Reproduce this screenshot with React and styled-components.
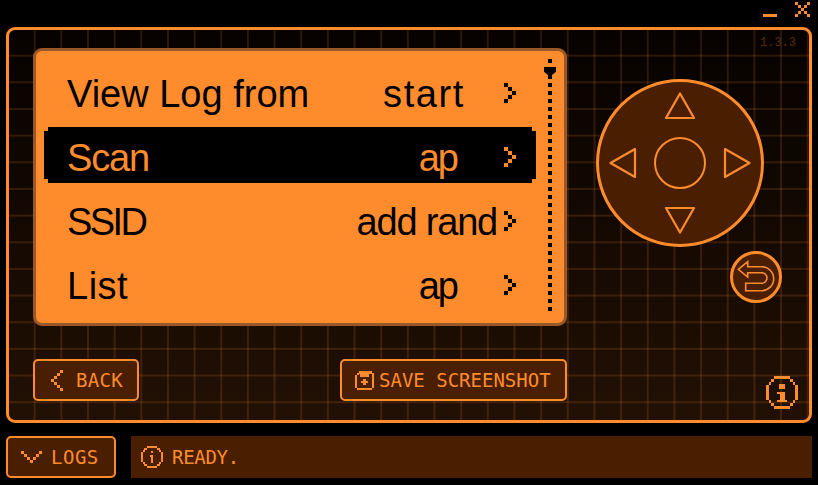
import React from "react";
import styled, { createGlobalStyle } from "styled-components";

const orange = "#ff8c2c";
const brown = "#4a1e00";

const rows = [
  { label: "View Log from", value: "start", end: 39, labelSpacing: 0, valueSpacing: 1.6 },
  { label: "Scan", value: "ap", end: 47, selected: true, labelSpacing: -1.2, valueSpacing: -2 },
  { label: "SSID", value: "add rand", end: 7, labelSpacing: -2.6, valueSpacing: -1.2 },
  { label: "List", value: "ap", end: 47, labelSpacing: 0.5, valueSpacing: -2 },
];

function PixelIcon({ width, height, size = 3, pixels }) {
  return (
    <svg width={width * size} height={height * size} viewBox={`0 0 ${width} ${height}`} shapeRendering="crispEdges">
      {pixels.map(([x, y, w = 1, h = 1], i) => (
        <rect key={i} x={x} y={y} width={w} height={h} fill="currentColor" />
      ))}
    </svg>
  );
}

const RowChevron = () => (
  <PixelIcon width={3} height={5} size={4} pixels={[[0, 0], [1, 1], [2, 2], [1, 3], [0, 4]]} />
);

const BackChevron = () => (
  <PixelIcon width={4} height={7} pixels={[[3, 0], [2, 1], [1, 2], [0, 3], [1, 4], [2, 5], [3, 6]]} />
);

const DownChevron = () => (
  <PixelIcon width={7} height={4} pixels={[[0, 0], [6, 0], [1, 1], [5, 1], [2, 2], [4, 2], [3, 3]]} />
);

const SaveIcon = () => (
  <svg width="19" height="19" viewBox="0 0 19 19" shapeRendering="crispEdges" fill={orange}>
    <path d="M4 0h13v2h2v15h-2v2H2v-2H0V4h2V2h2zM4 3v1H2v13h15V3h-3v3H5V3z" fillRule="evenodd" />
    <path d="M8 8h3v2h2v2h-2v2H8v-2H6v-2h2z" />
  </svg>
);

const SmallInfo = () => (
  <svg width="22" height="22" viewBox="0 0 22 22" shapeRendering="crispEdges" fill={orange}>
    <path d="M6 0h10v2h3v2h1v2h2v10h-2v2h-1v2h-3v2H6v-2H3v-2H2v-2H0V6h2V4h1V2h3zM6 2v2H4v2H2v10h2v2h2v2h10v-2h2v-2h2V6h-2V4h-2V2z" fillRule="evenodd" />
    <path d="M10 5h2v2h-2zM9 9h3v8h-2v-6H9z" />
  </svg>
);

const LargeInfo = () => (
  <svg width="32" height="33" viewBox="0 0 32 33" shapeRendering="crispEdges" fill={orange}>
    <path d="M8 0h16v3h3v3h2v3h3v15h-3v3h-2v3h-3v3H8v-3H5v-3H3v-3H0V9h3V6h2V3h3zM8 3v3H5v3H3v15h2v3h3v3h16v-3h3v-3h2V9h-2V6h-3V3z" fillRule="evenodd" />
    <path d="M13 8h6v5h-6zM11 16h8v8h2v2H11v-2h3v-6h-3z" />
  </svg>
);

const Triangle = ({ $dir }) => (
  <ArrowShape viewBox="0 0 32 32" $dir={$dir} fill="none" stroke={orange} strokeWidth="2.2" strokeLinejoin="round">
    <path d="M16 3.5 30 28H2Z" />
  </ArrowShape>
);

export default function App() {
  return (
    <Page>
      <GlobalStyle />
      <TitleBar>
        <WindowButton>
          <PixelIcon width={14} height={15} size={1} pixels={[[0, 12, 14, 3]]} />
        </WindowButton>
        <WindowButton>
          <PixelIcon
            width={5}
            height={5}
            size={3}
            pixels={[[0, 0], [4, 0], [1, 1], [3, 1], [2, 2], [1, 3], [3, 3], [0, 4], [4, 4]]}
          />
        </WindowButton>
      </TitleBar>

      <Frame>
        <Version>1.3.3</Version>
        <TopArea>
          <Screen>
            <Menu>
              {rows.map((row) => (
                <Row key={row.label} $selected={row.selected}>
                  <Label $spacing={row.labelSpacing}>{row.label}</Label>
                  <Value $end={row.end} $spacing={row.valueSpacing}>{row.value}</Value>
                  <RowChevron />
                </Row>
              ))}
            </Menu>
            <ScrollTrack>
              <ScrollThumb />
            </ScrollTrack>
          </Screen>

          <Controls>
            <DPad>
              <PadCell $col={2} $row={1}><Triangle $dir={0} /></PadCell>
              <PadCell $col={1} $row={2}><Triangle $dir={-90} /></PadCell>
              <PadCenter />
              <PadCell $col={3} $row={2}><Triangle $dir={90} /></PadCell>
              <PadCell $col={2} $row={3}><Triangle $dir={180} /></PadCell>
            </DPad>
            <ReturnButton>
              <svg width="46" height="46" viewBox="3 3 46 46" fill="none" stroke={orange} strokeWidth="1.6">
                <path d="M8.3 18.3 17.7 10.7V15.7H31.7A12 12 0 0 1 31.7 39.7H15.7V32.3H31.7A5.3 5.3 0 0 0 31.7 21.7H17.7V26Z" />
              </svg>
            </ReturnButton>
          </Controls>
        </TopArea>

        <BottomArea>
          <BottomButtons>
            <PixelButton $width={106} $gap={13} $pad={16} $spacing={0.3}>
              <BackChevron />
              BACK
            </PixelButton>
            <PixelButton $width={227} $gap={5} $pad={13} $spacing={0}>
              <SaveIcon />
              SAVE SCREENSHOT
            </PixelButton>
          </BottomButtons>
          <InfoButton>
            <LargeInfo />
          </InfoButton>
        </BottomArea>
      </Frame>

      <LogBar>
        <PixelButton $width={110} $gap={9} $pad={13} $spacing={0.5}>
          <DownChevron />
          LOGS
        </PixelButton>
        <Status>
          <SmallInfo />
          READY.
        </Status>
      </LogBar>
    </Page>
  );
}

const GlobalStyle = createGlobalStyle`
  html, body {
    margin: 0;
    height: 100%;
    background: #000;
    overflow: hidden;
  }
`;

const Page = styled.div`
  width: 818px;
  height: 485px;
  padding: 0 6px;
  box-sizing: border-box;
  display: flex;
  flex-direction: column;
  background: #000;
  color: ${orange};
`;

const TitleBar = styled.div`
  height: 27px;
  padding: 2px 2px 0 0;
  box-sizing: border-box;
  display: flex;
  justify-content: flex-end;
  align-items: flex-start;
  gap: 18px;
`;

const WindowButton = styled.div`
  display: flex;
  height: 15px;
`;

const Frame = styled.div`
  position: relative;
  width: 806px;
  height: 396px;
  padding: 18px 11px 0 24px;
  box-sizing: border-box;
  border: 3px solid ${orange};
  border-radius: 9px;
  background-color: transparent;
  background-image:
    linear-gradient(to right, transparent 25px, rgba(255, 140, 44, 0.15) 25px),
    linear-gradient(to bottom, transparent 25px, rgba(255, 140, 44, 0.15) 25px),
    linear-gradient(to bottom, #060200, #221004);
  background-size: 26.67px 26.67px, 26.67px 26.67px, 100% 100%;
`;

const Version = styled.div`
  position: absolute;
  top: 6px;
  right: 13px;
  font: 12px "Liberation Mono", monospace;
  line-height: 14px;
  color: #5c2c0b;
`;

const TopArea = styled.div`
  display: flex;
  gap: 29px;
`;

const Screen = styled.div`
  width: 534px;
  height: 278px;
  padding: 8px 0 0 8px;
  box-sizing: border-box;
  display: flex;
  border: 3px solid #99572a;
  border-radius: 9px;
  background: ${orange};
  font-family: "Liberation Sans", Arial, sans-serif;
  font-size: 38px;
  color: #000;
`;

const Menu = styled.div`
  width: 492px;
  display: flex;
  flex-direction: column;
`;

const Row = styled.div`
  height: 56px;
  margin: 4px 0;
  padding: 4px 20px 0 23px;
  box-sizing: border-box;
  flex-shrink: 0;
  display: flex;
  align-items: center;
  color: ${(p) => (p.$selected ? orange : "#000")};
  background: ${(p) => (p.$selected ? "#000" : "transparent")};
  clip-path: polygon(
    4px 0, calc(100% - 4px) 0, calc(100% - 4px) 4px, 100% 4px,
    100% calc(100% - 4px), calc(100% - 4px) calc(100% - 4px), calc(100% - 4px) 100%,
    4px 100%, 4px calc(100% - 4px), 0 calc(100% - 4px), 0 4px, 4px 4px
  );

  svg {
    flex-shrink: 0;
  }
`;

const Label = styled.span`
  flex: 1;
  padding-top: 2px;
  line-height: 1;
  letter-spacing: ${(p) => p.$spacing}px;
  white-space: nowrap;
`;

const Value = styled.span`
  margin-right: ${(p) => p.$end}px;
  padding-top: 2px;
  line-height: 1;
  letter-spacing: ${(p) => p.$spacing}px;
  white-space: nowrap;
`;

const ScrollTrack = styled.div`
  position: relative;
  width: 4px;
  height: 252px;
  margin-left: 12px;
  background-image: repeating-linear-gradient(to bottom, #000 0 4px, transparent 4px 8px);
`;

const ScrollThumb = styled.div`
  position: absolute;
  top: 8px;
  left: -4px;
  width: 12px;
  height: 8px;
  background: #000;
  clip-path: polygon(0 0, 100% 0, 100% 60%, 66% 100%, 33% 100%, 0 60%);
`;

const Controls = styled.div`
  margin-top: 31px;
  display: flex;
  flex-direction: column;
  gap: 4px;
`;

const DPad = styled.div`
  width: 168px;
  height: 168px;
  box-sizing: border-box;
  display: grid;
  grid-template-columns: 28px 52px 28px;
  grid-template-rows: 28px 52px 28px;
  gap: 17px;
  justify-content: center;
  align-content: center;
  border: 3px solid ${orange};
  border-radius: 50%;
  background: ${brown};
`;

const PadCell = styled.div`
  grid-column: ${(p) => p.$col};
  grid-row: ${(p) => p.$row};
  display: flex;
  align-items: center;
  justify-content: center;
`;

const ArrowShape = styled.svg`
  flex-shrink: 0;
  width: 32px;
  height: 32px;
  transform: rotate(${(p) => p.$dir}deg);
`;

const PadCenter = styled.div`
  grid-column: 2;
  grid-row: 2;
  border: 2px solid ${orange};
  border-radius: 50%;
`;

const ReturnButton = styled.div`
  width: 52px;
  height: 52px;
  margin-left: 134px;
  box-sizing: border-box;
  display: flex;
  align-items: center;
  justify-content: center;
  border: 3px solid ${orange};
  border-radius: 50%;
  background: ${brown};
`;

const BottomArea = styled.div`
  margin-top: 33px;
  display: flex;
  align-items: flex-start;
  justify-content: space-between;
`;

const BottomButtons = styled.div`
  width: 534px;
  display: flex;
  justify-content: space-between;
`;

const PixelButton = styled.div`
  width: ${(p) => p.$width}px;
  height: 42px;
  padding-left: ${(p) => p.$pad}px;
  box-sizing: border-box;
  display: flex;
  align-items: center;
  gap: ${(p) => p.$gap}px;
  border: 2px solid ${orange};
  border-radius: 5px;
  background: ${brown};
  font: 19px "DejaVu Sans Mono", monospace;
  letter-spacing: ${(p) => p.$spacing}px;
  white-space: nowrap;
`;

const InfoButton = styled.div`
  display: flex;
  margin-top: 17px;
`;

const LogBar = styled.div`
  margin-top: 13px;
  display: flex;
  gap: 15px;
`;

const Status = styled.div`
  width: 681px;
  height: 42px;
  padding-left: 10px;
  box-sizing: border-box;
  display: flex;
  align-items: center;
  gap: 9px;
  background: ${brown};
  font: 19px "DejaVu Sans Mono", monospace;
  letter-spacing: -0.3px;
`;
